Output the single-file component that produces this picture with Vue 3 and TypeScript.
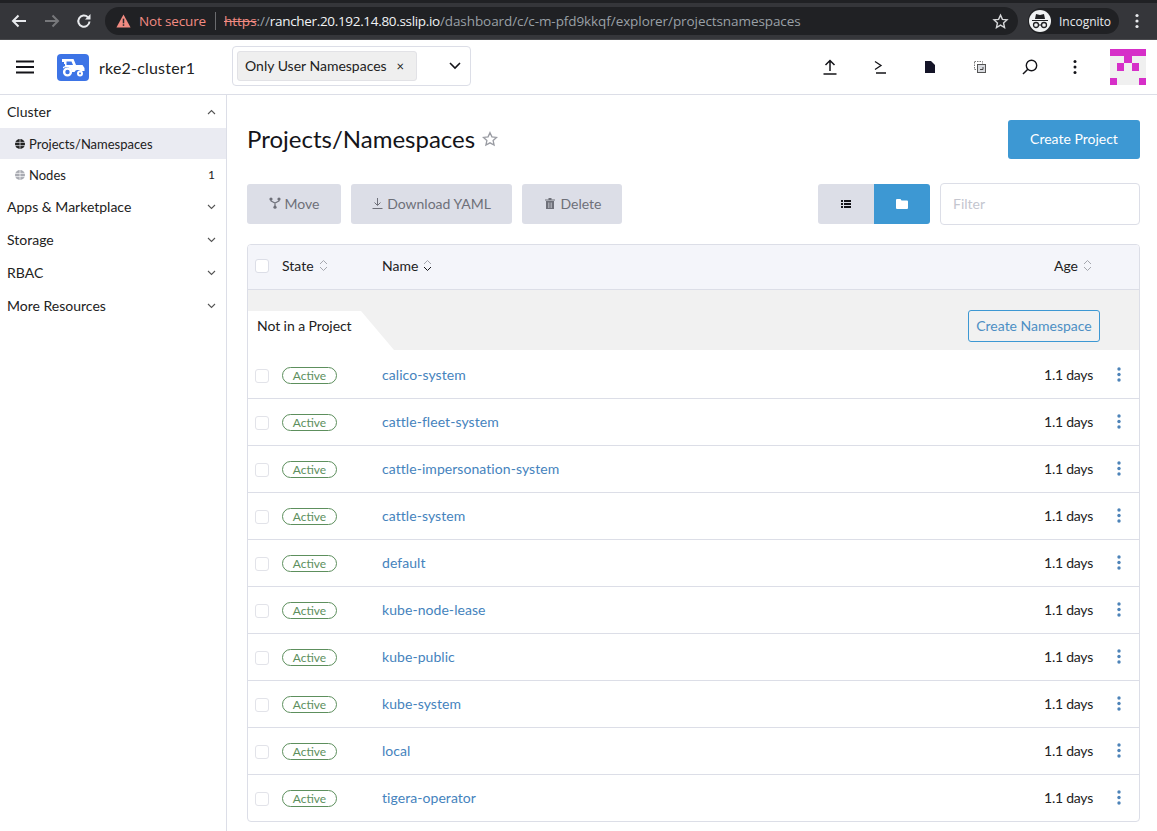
<template>
  <div class="page">
    <div class="chrome">
      <div class="chrome-top"></div>
      <div class="chrome-bar">
        <svg class="nav" width="18" height="18" viewBox="0 0 18 18"><path d="M16 9H3M8.500 3.500 3 9l5.500 5.500" fill="none" stroke="#e8eaed" stroke-width="2"/></svg>
        <svg class="nav fwd" width="18" height="18" viewBox="0 0 18 18"><path d="M2 9h13M9.500 3.500 15 9l-5.500 5.500" fill="none" stroke="#77787b" stroke-width="2"/></svg>
        <svg class="nav reload" width="18" height="18" viewBox="0 0 18 18"><path d="M14.500 9.500a5.600 5.600 0 1 1-1.600-4.300" fill="none" stroke="#e8eaed" stroke-width="2"/><path d="M15.500 2v5.500H10z" fill="#e8eaed"/></svg>
        <div class="omnibox">
          <svg width="15" height="14" viewBox="0 0 16 15"><path d="M8 .5 15.600 14.500H.4z" fill="#f28b82"/><rect x="7.200" y="5" width="1.600" height="5" fill="#2a2b2e"/><rect x="7.200" y="11" width="1.600" height="1.700" fill="#2a2b2e"/></svg>
          <span class="not-secure">Not secure</span>
          <span class="sep"></span>
          <span class="url"><s class="https">https</s><span class="dim">://</span><span class="host">rancher.20.192.14.80.sslip.io</span><span class="dim">/dashboard/c/c-m-pfd9kkqf/explorer/projectsnamespaces</span></span>
          <svg class="url-star" width="17" height="17" viewBox="0 0 24 24"><path d="m12 3 2.700 6 6.500.7-4.900 4.400 1.400 6.400L12 17.200l-5.700 3.300 1.400-6.400-4.900-4.400 6.500-.7z" fill="none" stroke="#d5d6d8" stroke-width="2"/></svg>
        </div>
        <div class="incognito">
          <span class="spy">
            <svg width="18" height="16" viewBox="0 0 18 16"><path d="M1 7h16v1H1zM4 6l1-5 4 1 4-1 1 5z" fill="#202124"/><circle cx="5" cy="12" r="2.500" fill="none" stroke="#202124" stroke-width="1.300"/><circle cx="13" cy="12" r="2.500" fill="none" stroke="#202124" stroke-width="1.300"/><path d="M7.500 12h3" stroke="#202124"/></svg>
          </span>
          <span>Incognito</span>
        </div>
        <svg class="chrome-menu" width="4" height="16" viewBox="0 0 4 16"><circle cx="2" cy="2.500" r="1.600" fill="#e8eaed"/><circle cx="2" cy="8" r="1.600" fill="#e8eaed"/><circle cx="2" cy="13.500" r="1.600" fill="#e8eaed"/></svg>
      </div>
    </div>

    <header class="topbar">
      <div class="brand">
        <svg class="burger" width="18" height="14" viewBox="0 0 18 14"><path d="M0 1.500h18M0 7h18M0 12.500h18" stroke="#141419" stroke-width="2"/></svg>
        <span class="cluster-badge">
          <svg width="25" height="19" viewBox="0 0 25 19"><path d="M1 1h11.500l2.500 6h6.500l2 3v3h-4a4 4 0 0 0-6 1H11a5.500 5.500 0 0 0-9-3.500V9l2-1V6H3V4H1z" fill="#fff"/><path d="M5.500 3.500h5L12 7H5.500z" fill="#3d74e6"/><circle cx="6.500" cy="14" r="3.400" fill="#3d74e6" stroke="#fff" stroke-width="2.400"/><circle cx="19" cy="15.500" r="2" fill="#3d74e6" stroke="#fff" stroke-width="2"/></svg>
        </span>
        <span class="cluster-name">rke2-cluster1</span>
      </div>
      <div class="ns-select">
        <span class="ns-chip">Only User Namespaces <i>×</i></span>
        <svg width="12" height="8" viewBox="0 0 12 8"><path d="m1 1 5 5 5-5" fill="none" stroke="#141419" stroke-width="1.600"/></svg>
      </div>
      <div class="actions">
        <span class="action">
          <svg width="16" height="16" viewBox="0 0 16 16"><path d="M8 12V1.500M3.500 6 8 1.500 12.500 6M1.500 15h13" fill="none" stroke="#141419" stroke-width="1.500"/></svg>
        </span>
        <span class="action">
          <svg width="14" height="14" viewBox="0 0 14 14"><path d="m2 1.500 6 4-6 4M3 13h10" fill="none" stroke="#141419" stroke-width="1.300"/></svg>
        </span>
        <span class="action">
          <svg width="10" height="12" viewBox="0 0 10 12"><path d="M0 0h6l4 4v8H0z" fill="#141428"/></svg>
        </span>
        <span class="action">
          <svg width="12" height="12" viewBox="0 0 12 12"><rect x=".5" y=".5" width="8" height="8" fill="none" stroke="#777" stroke-dasharray="1.500 1"/><rect x="3.500" y="3.500" width="8" height="8" fill="#d9dbe0" stroke="#555"/><path d="M6 8.500h3V6" fill="none" stroke="#444"/></svg>
        </span>
        <span class="action">
          <svg width="16" height="16" viewBox="0 0 16 16"><circle cx="9.500" cy="6.500" r="5.200" fill="none" stroke="#141419" stroke-width="1.400"/><path d="M5.800 10.200 1 15" stroke="#141419" stroke-width="1.500"/></svg>
        </span>
        <span class="action last">
          <svg width="4" height="14" viewBox="0 0 4 14"><circle cx="2" cy="1.600" r="1.500" fill="#141419"/><circle cx="2" cy="7" r="1.500" fill="#141419"/><circle cx="2" cy="12.400" r="1.500" fill="#141419"/></svg>
        </span>
      </div>
      <svg class="avatar" width="36" height="36" viewBox="0 0 5 5" shape-rendering="crispEdges">
        <rect width="5" height="5" fill="#f0f0f0"/>
        <path d="M0 0h5v1H0zM2 1h1v1H2zM1 2h1v1H1zM3 2h1v1H3zM0 4h1v1H0zM4 4h1v1H4z" fill="#d62fc8"/>
      </svg>
    </header>

    <div class="body">
      <aside class="sidebar">
        <div class="group-head first"><span>Cluster</span><svg class="chev" width="9" height="6" viewBox="0 0 9 6"><path d="m1 5 3.500-3.500L8 5" fill="none" stroke="#555" stroke-width="1.100"/></svg></div>
        <div class="nav-item active">
          <svg class="globe" width="10" height="10" viewBox="0 0 10 10"><circle cx="5" cy="5" r="5" fill="#222"/><path d="M0 3.400h10M0 6.600h10M5 0v10" stroke="#e8e9f0" stroke-width=".7"/></svg>
          <span>Projects/Namespaces</span>
        </div>
        <div class="nav-item">
          <svg class="globe" width="10" height="10" viewBox="0 0 10 10"><circle cx="5" cy="5" r="5" fill="#a9abb2"/><path d="M0 3.400h10M0 6.600h10M5 0v10" stroke="#fff" stroke-width=".7"/></svg>
          <span>Nodes</span><em>1</em>
        </div>
        <div v-for="g in navGroups" :key="g" class="group-head">
          <span>{{ g }}</span>
          <svg class="chev" width="9" height="6" viewBox="0 0 9 6"><path d="m1 1 3.500 3.500L8 1" fill="none" stroke="#555" stroke-width="1.100"/></svg>
        </div>
      </aside>

      <main class="main">
        <div class="title-row">
          <h1>Projects/Namespaces</h1>
          <svg class="title-star" width="16" height="16" viewBox="0 0 24 24"><path d="m12 2.500 2.900 6.300 6.900.8-5.100 4.700 1.400 6.800L12 17.700l-6.100 3.400 1.400-6.800-5.100-4.700 6.900-.8z" fill="none" stroke="#9a9ca3" stroke-width="2"/></svg>
          <button class="btn-primary">Create Project</button>
        </div>

        <div class="toolbar">
          <button class="btn-off move">
            <svg width="12" height="12" viewBox="0 0 12 12"><circle cx="2" cy="2" r="1.600" fill="#6e7079"/><circle cx="10" cy="2" r="1.600" fill="#6e7079"/><circle cx="6" cy="10.200" r="1.600" fill="#6e7079"/><path d="M2 2v2l4 2 4-2V2M6 6v4" fill="none" stroke="#6e7079" stroke-width="1.200"/></svg>
            Move
          </button>
          <button class="btn-off yaml">
            <svg width="11" height="11" viewBox="0 0 11 11"><path d="M5.500 0v7M2.500 4.500l3 3 3-3M.5 10.500h10" fill="none" stroke="#6e7079" stroke-width="1"/></svg>
            Download YAML
          </button>
          <button class="btn-off del">
            <svg width="10" height="11" viewBox="0 0 10 11"><path d="M0 1.500h10v1H0zM3.500 0h3v1.500h-3zM1 3h8v8H1z" fill="#6e7079"/><path d="M3.500 4.500V10M5 4.500V10M6.500 4.500V10" stroke="#dcdee7" stroke-width=".5"/></svg>
            Delete
          </button>
          <div class="view-toggle">
            <span class="toggle-off">
              <svg width="10" height="8" viewBox="0 0 10 8"><path d="M0 0h2v2H0zM3 0h7v2H3zM0 3h2v2H0zM3 3h7v2H3zM0 6h2v2H0zM3 6h7v2H3z" fill="#141419"/></svg>
            </span>
            <span class="toggle-on">
              <svg width="12" height="10" viewBox="0 0 12 10"><path d="M0 1a1 1 0 0 1 1-1h3.500l1 1.500H11a1 1 0 0 1 1 1V9a1 1 0 0 1-1 1H1a1 1 0 0 1-1-1z" fill="#fff"/></svg>
            </span>
          </div>
          <div class="filter">Filter</div>
        </div>

        <div class="table">
          <div class="thead">
            <span class="check head-check"></span>
            <span class="col-state">State <svg class="sort" width="9" height="13" viewBox="0 0 9 13"><path d="m1 5 3.500-3.500L8 5M1 8l3.500 3.500L8 8" fill="none" stroke="#a5a7ae" stroke-width="1"/></svg></span>
            <span class="col-name">Name <svg class="sort" width="9" height="13" viewBox="0 0 9 13"><path d="m1 5 3.500-3.500L8 5" fill="none" stroke="#a5a7ae" stroke-width="1"/><path d="m1 8 3.500 3.500L8 8" fill="none" stroke="#141419" stroke-width="1"/></svg></span>
            <span class="col-age">Age <svg class="sort" width="9" height="13" viewBox="0 0 9 13"><path d="m1 5 3.500-3.500L8 5M1 8l3.500 3.500L8 8" fill="none" stroke="#a5a7ae" stroke-width="1"/></svg></span>
          </div>
          <div class="group-row">
            <span class="group-tab">Not in a Project</span>
            <button class="btn-outline">Create Namespace</button>
          </div>
          <div v-for="ns in namespaces" :key="ns" class="row">
            <span class="check"></span>
            <span class="col-state"><span class="badge">Active</span></span>
            <span class="col-name link">{{ ns }}</span>
            <span class="age">1.1 days</span>
            <svg class="row-menu" width="4" height="15" viewBox="0 0 4 15"><circle cx="2" cy="2" r="1.700" fill="#4d83b8"/><circle cx="2" cy="7.500" r="1.700" fill="#4d83b8"/><circle cx="2" cy="13" r="1.700" fill="#4d83b8"/></svg>
          </div>
        </div>
      </main>
    </div>
  </div>
</template>

<script setup lang="ts">
const navGroups: string[] = ['Apps & Marketplace', 'Storage', 'RBAC', 'More Resources']

const namespaces: string[] = [
  'calico-system',
  'cattle-fleet-system',
  'cattle-impersonation-system',
  'cattle-system',
  'default',
  'kube-node-lease',
  'kube-public',
  'kube-system',
  'local',
  'tigera-operator',
]
</script>

<style>
html,
body {
  margin: 0;
  background: #fff;
  overflow: hidden;
}
</style>

<style scoped>
.page {
  width: 1157px;
  height: 831px;
  overflow: hidden;
  font-family: Lato, "Liberation Sans", sans-serif;
  color: #141419;
  display: flex;
  flex-direction: column;
}

/* browser chrome */
.chrome {
  height: 40px;
  background: #35363a;
  flex: none;
  box-sizing: border-box;
  border-bottom: 1px solid #4a4b4e;
}
.chrome-top {
  height: 3px;
  background: #202124;
}
.chrome-bar {
  height: 36px;
  display: flex;
  align-items: center;
  padding-left: 10px;
}
.nav { flex: none; }
.fwd { margin-left: 15px; }
.reload { margin-left: 14px; }
.omnibox {
  margin-left: 12px;
  width: 913px;
  height: 28px;
  border-radius: 14px;
  background: #202124;
  display: flex;
  align-items: center;
  padding-left: 11px;
  box-sizing: border-box;
  font-family: "Open Sans", "Noto Sans", sans-serif;
  font-size: 13.5px;
  white-space: nowrap;
}
.not-secure { color: #f28b82; margin-left: 8px; letter-spacing: -0.15px; }
.sep { width: 1px; height: 18px; background: #6a6b6e; margin: 0 8px 0 9px; }
.https { color: #f28b82; }
.dim { color: #9aa0a6; letter-spacing: -0.08px; }
.host { color: #f1f3f4; letter-spacing: -0.32px; }
.url-star { margin-left: auto; margin-right: 9px; }
.incognito {
  margin-left: 10px;
  width: 90px;
  height: 26px;
  border-radius: 13px;
  background: #202124;
  color: #e8eaed;
  display: flex;
  align-items: center;
  gap: 8px;
  font-family: "Open Sans", "Noto Sans", sans-serif;
  font-size: 12px;
  padding-left: 1px;
}
.spy {
  width: 22px;
  height: 22px;
  border-radius: 50%;
  background: #f1f3f4;
  display: flex;
  align-items: center;
  justify-content: center;
}
.chrome-menu { margin-left: 16px; }

/* app header */
.topbar {
  height: 55px;
  flex: none;
  box-sizing: border-box;
  border-bottom: 1px solid #dcdee7;
  display: flex;
  align-items: center;
  padding-left: 16px;
}
.brand {
  display: flex;
  align-items: center;
  width: 216px;
  flex: none;
}
.burger { flex: none; }
.cluster-badge {
  margin-left: 23px;
  width: 32px;
  height: 27px;
  border-radius: 4px;
  background: #3d74e6;
  display: flex;
  align-items: center;
  justify-content: center;
}
.cluster-name {
  margin-left: 10px;
  font-size: 16px;
  letter-spacing: 0.2px;
  color: #222;
}
.ns-select {
  width: 239px;
  height: 40px;
  margin-bottom: 2px;
  box-sizing: border-box;
  border: 1px solid #dcdee7;
  border-radius: 4px;
  display: flex;
  align-items: center;
  padding: 0 9px 0 4px;
  justify-content: space-between;
}
.ns-chip {
  height: 30px;
  padding: 0 12px 1px 7px;
  box-sizing: border-box;
  width: 180px;
  background: #efefef;
  border: 1px solid #e2e2e6;
  border-radius: 3px;
  font-size: 14px;
  display: flex;
  align-items: center;
  justify-content: space-between;
  color: #222;
  white-space: nowrap;
}
.ns-chip i {
  font-style: normal;
  font-size: 13px;
}
.actions {
  margin-left: auto;
  display: flex;
  align-items: center;
}
.action {
  width: 50px;
  display: flex;
  justify-content: center;
}
.action.last { width: 40px; }
.avatar {
  margin: 0 11px 0 15px;
  flex: none;
}

/* body */
.body {
  flex: 1;
  display: flex;
  min-height: 0;
}
.sidebar {
  width: 227px;
  flex: none;
  box-sizing: border-box;
  border-right: 1px solid #dcdee7;
  font-size: 14px;
}
.group-head {
  height: 33px;
  display: flex;
  align-items: center;
  justify-content: space-between;
  padding: 0 10px 0 7px;
  color: #222;
}
.chev { flex: none; }
.nav-item {
  height: 31px;
  display: flex;
  align-items: center;
  padding: 0 11px 0 15px;
  font-size: 13px;
  gap: 4px;
  color: #222;
}
.nav-item.active { background: #eaebf2; }
.nav-item em {
  margin-left: auto;
  font-style: normal;
  font-size: 12px;
}

.main {
  flex: 1;
  min-width: 0;
  padding: 0 17px 0 20px;
}
.title-row {
  height: 88px;
  display: flex;
  align-items: center;
}
h1 {
  margin: 0 0 2px;
  font-size: 24px;
  font-weight: 400;
  color: #141419;
}
.title-star { margin-left: 7px; }
.btn-primary {
  margin-left: auto;
  width: 132px;
  height: 39px;
  border: 0;
  border-radius: 3px;
  background: #3d98d3;
  color: #fff;
  font: 14px Lato, "Liberation Sans", sans-serif;
  padding: 0 0 2px;
}
.toolbar {
  height: 42px;
  margin-bottom: 19px;
  display: flex;
  align-items: center;
}
.btn-off {
  height: 40px;
  border: 0;
  border-radius: 3px;
  background: #dcdee7;
  color: #6e7079;
  font: 14px Lato, "Liberation Sans", sans-serif;
  padding: 0 0 2px;
  display: flex;
  align-items: center;
  justify-content: center;
  gap: 4px;
}
.move { width: 94px; }
.yaml { width: 161px; margin-left: 10px; }
.del { width: 100px; margin-left: 10px; gap: 6px; padding-left: 2px; }
.view-toggle {
  margin-left: auto;
  display: flex;
  height: 40px;
  border-radius: 3px;
  overflow: hidden;
}
.toggle-off,
.toggle-on {
  width: 56px;
  display: flex;
  align-items: center;
  justify-content: center;
}
.toggle-off { background: #dcdee7; }
.toggle-on { background: #3d98d3; }
.filter {
  margin-left: 10px;
  width: 200px;
  height: 42px;
  box-sizing: border-box;
  border: 1px solid #dcdee7;
  border-radius: 4px;
  padding: 0 0 2px 12px;
  display: flex;
  align-items: center;
  font-size: 14px;
  color: #c4c6cf;
}

/* table */
.table {
  border: 1px solid #dcdee7;
  border-radius: 4px;
  overflow: hidden;
}
.thead {
  height: 45px;
  box-sizing: border-box;
  background: #f4f5fa;
  border-bottom: 1px solid #dcdee7;
  display: flex;
  align-items: center;
  font-size: 14px;
  padding: 0 0 3px 7px;
  color: #222;
}
.check {
  width: 12px;
  height: 12px;
  border: 1px solid #dcdee7;
  border-radius: 3px;
  background: #fff;
  flex: none;
}
.col-state {
  margin-left: 13px;
  width: 100px;
  flex: none;
  display: flex;
  align-items: center;
  gap: 5px;
}
.col-name {
  flex: 1;
  display: flex;
  align-items: center;
  gap: 5px;
}
.col-age {
  margin-right: 47px;
  display: flex;
  align-items: center;
  gap: 5px;
}
.group-row {
  height: 60px;
  box-sizing: border-box;
  background: #f1f1f1;
  display: flex;
  align-items: flex-end;
  justify-content: space-between;
  padding-right: 39px;
}
.group-tab {
  height: 39px;
  width: 146px;
  box-sizing: border-box;
  background: #fff;
  padding: 5px 0 0 9px;
  font-size: 14px;
  line-height: 20px;
  letter-spacing: -0.07px;
  color: #222;
  clip-path: polygon(0 0, 113px 0, 146px 100%, 0 100%);
}
.btn-outline {
  width: 132px;
  height: 32px;
  margin-bottom: 8px;
  box-sizing: border-box;
  padding: 0 0 1px;
  border: 1px solid #3d98d3;
  border-radius: 3px;
  background: transparent;
  color: #4d8fc4;
  font: 14px Lato, "Liberation Sans", sans-serif;
}
.row {
  height: 47px;
  box-sizing: border-box;
  display: flex;
  align-items: center;
  padding: 0 18px 0 7px;
  font-size: 14px;
  border-bottom: 1px solid #dcdee7;
}
.group-row + .row {
  height: 49px;
  padding-top: 2px;
}
.row:last-child {
  height: 46px;
  border-bottom: 0;
}
.row .check {
  border-color: #e2e3e9;
  margin-top: 2px;
}
.badge {
  width: 55px;
  height: 17px;
  box-sizing: border-box;
  border: 1px solid #5d8f5d;
  border-radius: 9px;
  color: #5d8f5d;
  font-size: 12px;
  display: flex;
  align-items: center;
  justify-content: center;
}
.link {
  color: #4583bd;
  letter-spacing: 0.06px;
  margin-bottom: 2px;
}
.age {
  margin: 0 24px 2px 0;
  letter-spacing: -0.25px;
  color: #222;
}
.row-menu {
  flex: none;
  margin-bottom: 2px;
}
</style>
